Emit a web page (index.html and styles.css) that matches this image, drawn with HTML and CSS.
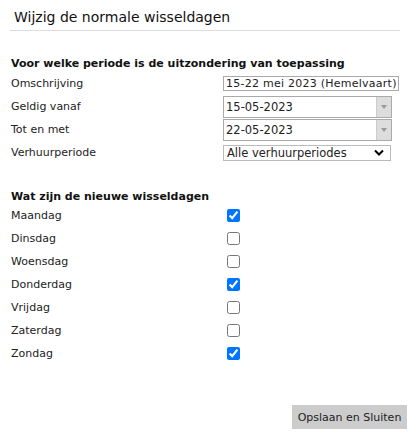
FILE: index.html
```html
<!DOCTYPE html>
<html lang="nl">
<head>
  <meta charset="UTF-8" />
  <meta name="viewport" content="width=device-width, initial-scale=1.0" />
  <title>Wijzig de normale wisseldagen</title>
  <link rel="stylesheet" href="styles.css">
</head>
<body>
  <div class="dialog">
    <h1 class="title">Wijzig de normale wisseldagen</h1>

    <h2 class="group first">Voor welke periode is de uitzondering van toepassing</h2>
    <div class="row">
      <label>Omschrijving</label>
      <input class="text" type="text" value="15-22 mei 2023 (Hemelvaart)">
    </div>
    <div class="row">
      <label>Geldig vanaf</label>
      <div class="date">
        <span class="value">15-05-2023</span>
        <span class="drop"><span class="tri"></span></span>
      </div>
    </div>
    <div class="row">
      <label>Tot en met</label>
      <div class="date">
        <span class="value">22-05-2023</span>
        <span class="drop"><span class="tri"></span></span>
      </div>
    </div>
    <div class="row">
      <label>Verhuurperiode</label>
      <div class="select">
        <span>Alle verhuurperiodes</span>
        <svg width="10" height="7" viewBox="0 0 10 7"><path d="M1 1.5 L5 5.5 L9 1.5" fill="none" stroke="#000" stroke-width="2"/></svg>
      </div>
    </div>

    <h2 class="group second">Wat zijn de nieuwe wisseldagen</h2>
    <div class="row"><label>Maandag</label><input type="checkbox" checked></div>
    <div class="row"><label>Dinsdag</label><input type="checkbox"></div>
    <div class="row"><label>Woensdag</label><input type="checkbox"></div>
    <div class="row"><label>Donderdag</label><input type="checkbox" checked></div>
    <div class="row"><label>Vrijdag</label><input type="checkbox"></div>
    <div class="row"><label>Zaterdag</label><input type="checkbox"></div>
    <div class="row"><label>Zondag</label><input type="checkbox" checked></div>

    <div class="actions">
      <button>Opslaan en Sluiten</button>
    </div>
  </div>
</body>
</html>
```

FILE: styles.css
```css
body {
    margin: 0;
    font-family: "DejaVu Sans", Verdana, sans-serif;
    font-size: 11px;
    color: #222;
    background: #fff;
}

.dialog {
    margin-left: 10px;
    width: 390px;
    padding-top: 9px;
}

.title {
    margin: 0;
    padding: 0 4px 5px;
    font-size: 14px;
    font-weight: normal;
    line-height: 16px;
    color: #111;
    border-bottom: 1px solid #ddd;
}

.group {
    margin: 0;
    padding-left: 1px;
    font-size: 11px;
    line-height: 13px;
    font-weight: bold;
    color: #111;
}

.group.first {
    margin-top: 26px;
    margin-bottom: 2px;
}

.group.second {
    margin-top: 26px;
    margin-bottom: 1px;
}

.row {
    display: grid;
    grid-template-columns: 212px auto;
    align-items: center;
    height: 23px;
    padding-left: 1px;
}

.text {
    box-sizing: border-box;
    width: 176px;
    height: 15px;
    margin: 0;
    padding: 0 2px;
    border: 1px solid #aaa;
    font-family: inherit;
    font-size: 11px;
    letter-spacing: 0.25px;
    color: #222;
}

.date {
    box-sizing: border-box;
    width: 169px;
    height: 22px;
    display: flex;
    align-items: center;
    border: 1px solid #aaa;
    padding-left: 2px;
    font-size: 11.5px;
}

.value {
    flex: 1;
}

.drop {
    width: 14px;
    align-self: stretch;
    background: #ddd;
    border-left: 1px solid #ccc;
    display: flex;
    align-items: center;
    justify-content: center;
}

.tri {
    width: 0;
    height: 0;
    border-left: 3px solid transparent;
    border-right: 3px solid transparent;
    border-top: 4px solid #999;
}

.select {
    box-sizing: border-box;
    width: 168px;
    height: 16px;
    display: flex;
    align-items: center;
    justify-content: space-between;
    border: 1px solid #bbb;
    padding: 0 6px 0 3px;
    font-size: 11.5px;
}

input[type="checkbox"] {
    width: 13px;
    height: 13px;
    margin: 0 0 0 4px;
}

.actions {
    display: flex;
    justify-content: flex-end;
    margin-top: 40px;
    margin-right: -7px;
}

button {
    background: #ccc;
    border: none;
    padding: 0 5px;
    height: 24px;
    width: 115px;
    font-family: inherit;
    font-size: 11px;
    color: #222;
}
```
